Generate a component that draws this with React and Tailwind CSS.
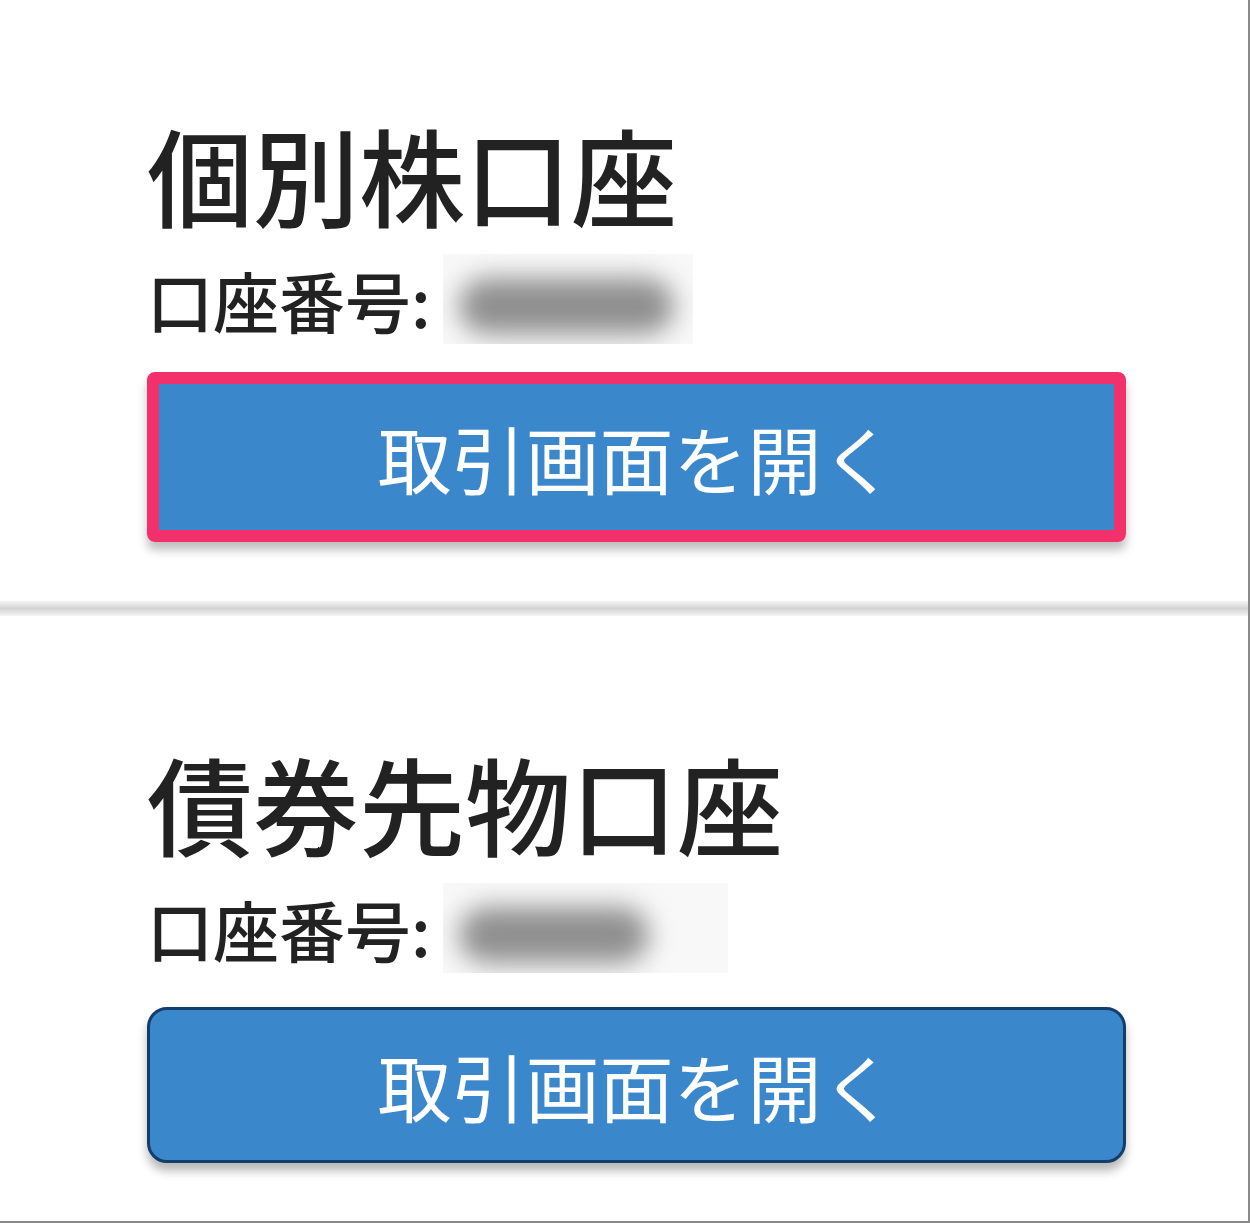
import React from 'react';

const JP = { fontFamily: '"Noto Sans CJK JP", "Noto Sans", sans-serif' };

// blurred-out account number
const Masked = ({ wide }) => (
  <div className={`relative h-[90px] ${wide ? 'w-[285px]' : 'w-[250px]'} bg-[#f8f8f8] overflow-hidden`}>
    <div className={`absolute top-[24px] left-[16px] h-[56px] ${wide ? 'w-[190px]' : 'w-[215px]'} rounded-full bg-[#8f8f8f] blur-[13px]`} />
  </div>
);

const AccountSection = ({ title, wide, highlighted }) => {
  const button = (
    <button
      className={`w-full flex items-center justify-center bg-[#3b87cb] text-white text-[74px] leading-none ${
        highlighted ? 'h-[146px]' : 'h-[156px] rounded-[20px] border-[3px] border-[#133d6b] shadow-[0_8px_10px_rgba(0,0,0,0.28)]'
      }`}
    >
      取引画面を開く
    </button>
  );

  return (
    <div className="pl-[147px] pr-[122px]">
      <h2 className="text-[106px] leading-none font-medium text-[#222]">{title}</h2>
      <div className="mt-[28px] flex items-center">
        <span className="text-[66px] leading-none font-medium text-[#222]">口座番号:</span>
        <div className="ml-[12px]">
          <Masked wide={wide} />
        </div>
      </div>
      <div className={highlighted ? 'mt-[28px]' : 'mt-[34px]'}>
        {highlighted ? (
          <div className="rounded-[8px] border-[12px] border-[#f2306b] shadow-[0_8px_10px_rgba(0,0,0,0.25)]">{button}</div>
        ) : (
          button
        )}
      </div>
    </div>
  );
};

export default function App() {
  return (
    <div className="w-[1250px] h-[1223px] bg-white border-r-2 border-b-2 border-[#8a8a8a] overflow-hidden" style={JP}>
      <div className="pt-[120px]">
        <AccountSection title="個別株口座" highlighted />
      </div>
      <div className="mt-[59px] h-[15px] bg-gradient-to-b from-[#f4f4f4] via-[#d4d4d4] to-[#f4f4f4]" />
      <div className="pt-[133px]">
        <AccountSection title="債券先物口座" wide />
      </div>
    </div>
  );
}
